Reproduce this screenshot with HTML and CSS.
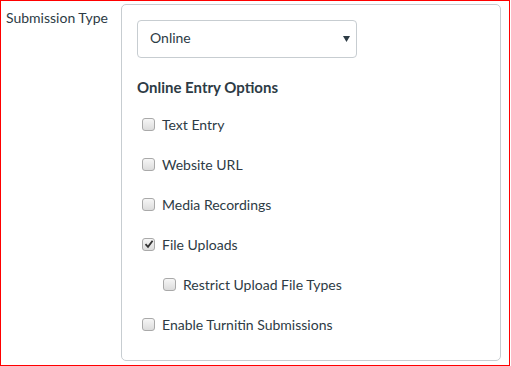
FILE: index.html
```html
<!DOCTYPE html>
<html>
<head>
<meta charset="utf-8">
<link rel="stylesheet" href="styles.css">
</head>
<body>
<div class="frame">
  <div class="label">Submission Type</div>
  <div class="panel">
    <div class="select">
      <span>Online</span>
      <svg class="arrow" width="7" height="6" viewBox="0 0 7 6"><polygon points="0,0 7,0 3.5,6" fill="#2d3b45"/></svg>
    </div>
    <div class="heading">Online Entry Options</div>
    <div class="row"><span class="cb"></span><span>Text Entry</span></div>
    <div class="row"><span class="cb"></span><span>Website URL</span></div>
    <div class="row"><span class="cb"></span><span>Media Recordings</span></div>
    <div class="row"><span class="cb checked"><svg width="10" height="10" viewBox="0 0 10 10"><path d="M1.5 5.2 L4 7.8 L8.6 1.8" fill="none" stroke="#333" stroke-width="1.8"/></svg></span><span>File Uploads</span></div>
    <div class="row nested"><span class="cb"></span><span>Restrict Upload File Types</span></div>
    <div class="row"><span class="cb"></span><span>Enable Turnitin Submissions</span></div>
  </div>
</div>
</body>
</html>
```

FILE: styles.css
```css
html, body {
  margin: 0;
  padding: 0;
  background: #fff;
}
.frame {
  box-sizing: border-box;
  width: 510px;
  height: 366px;
  border: 1px solid #ff0000;
  display: flex;
  font-family: Lato, "Open Sans", sans-serif;
  font-size: 14px;
  color: #2d3b45;
}
.label {
  width: 115px;
  padding: 8px 0 0 5px;
  line-height: 18px;
}
.panel {
  box-sizing: border-box;
  width: 380px;
  height: 357px;
  margin-top: 3px;
  border: 1px solid #c7cdd1;
  border-radius: 5px;
  padding: 15px 0 0 15px;
}
.select {
  box-sizing: border-box;
  width: 220px;
  height: 38px;
  border: 1px solid #c7cdd1;
  border-radius: 4px;
  display: flex;
  align-items: center;
  justify-content: space-between;
  padding: 0 6px 3px 12px;
}
.arrow { display: block; margin-top: 2px; }
.heading {
  font-weight: bold;
  font-size: 15px;
  line-height: 20px;
  margin-top: 19px;
}
.row {
  height: 40px;
  display: flex;
  align-items: center;
  gap: 7px;
  padding-left: 5px;
}
.heading + .row { margin-top: 7px; }
.row.nested { padding-left: 26px; }
.cb {
  box-sizing: border-box;
  width: 13px;
  height: 13px;
  border: 1px solid #a9a9a9;
  border-radius: 3px;
  background: linear-gradient(#f6f6f6, #dcdcdc);
  display: flex;
  align-items: center;
  justify-content: center;
}
.cb svg { display: block; }
```
